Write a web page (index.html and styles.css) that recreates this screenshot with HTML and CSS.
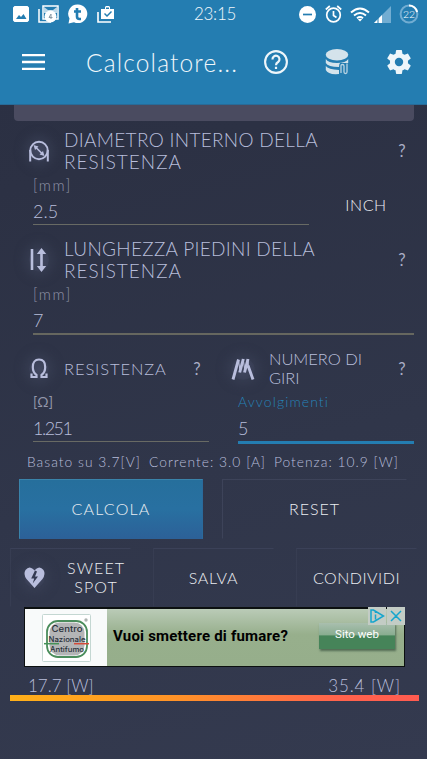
FILE: index.html
```html
<!DOCTYPE html>
<html lang="it">
<head>
<meta charset="utf-8">
<title>Calcolatore</title>
<link rel="stylesheet" href="styles.css">
</head>
<body>
<header class="header">
  <div class="status">
    <div class="status-left">
      <svg width="16" height="16" viewBox="0 0 16 16"><path fill="#fff" fill-rule="evenodd" d="M1.5 0h13L16 1.5v13L14.500 16h-13L0 14.500v-13zM3 13h10.500l-3-5-2.500 3-2-2z"/></svg>
      <svg width="21" height="18" viewBox="0 0 21 18"><path d="M1 4v13h12" fill="none" stroke="#fff" stroke-width="1.500"/><path d="M5 1h15v13H5z" fill="#247db1" stroke="#fff" stroke-width="1.500"/><path d="M6 2l4 3h5l4-3v6H6z" fill="#fff" opacity=".7"/><circle cx="12.500" cy="11.500" r="6" fill="#fff"/><path d="M13 9l-2 3.500h3.500M13 9v5" stroke="#8a9aa5" fill="none"/></svg>
      <svg width="20" height="20" viewBox="0 0 20 20"><path d="M10 .5a9.300 9.300 0 1 1-4 17.700L.500 19.500l1-5A9.300 9.300 0 0 1 10 .5z" fill="#fff"/><path d="M9 4v8.500q0 2.500 2.500 2.500H13M6 7.500h7" fill="none" stroke="#247db1" stroke-width="2.600"/></svg>
      <svg width="18" height="17" viewBox="0 0 18 17"><path d="M1 6v10h13" fill="none" stroke="#fff" stroke-width="1.600"/><path fill="#fff" fill-rule="evenodd" d="M4 3h4V1l1-1h3l1 1v2h4v10H4zm5 0h3V1.500H9zM7 8l3 3 5-5-1-1-4 4-2-2z"/></svg>
    </div>
    <div class="clock">23:15</div>
    <div class="status-right">
      <svg width="17" height="17" viewBox="0 0 17 17"><circle cx="8.500" cy="8.500" r="8.500" fill="#fff"/><path d="M4 8.500h9" stroke="#247db1" stroke-width="1.700"/></svg>
      <svg width="17" height="18" viewBox="0 0 17 18"><g fill="none" stroke="#fff" stroke-width="1.700"><circle cx="8.500" cy="10" r="6.800"/><path d="M8.500 6v4.500l3 2M.800 4.500l4-3.500M16.200 4.500l-4-3.500"/></g></svg>
      <svg width="20" height="15" viewBox="0 0 20 15"><g fill="none" stroke="#fff" stroke-width="2"><path d="M1 5.500q9-8 18 0M4 8.500q6-5 12 0M7 11.200q3-2.200 6 0"/></g><path d="M7.800 12.300q2.200-1.200 4.400 0L10 14.500z" fill="#fff"/></svg>
      <svg width="17" height="17" viewBox="0 0 17 17"><path d="M0 17L17 0v17z" fill="#72add2"/><path d="M0 17l8-8V17z" fill="#fff"/><path d="M4 12v5" stroke="#247db1"/></svg>
      <svg class="battery" width="20" height="20" viewBox="0 0 20 20"><g fill="none" stroke-width="2"><circle cx="10" cy="10" r="8.400" stroke="#72add2"/><path d="M10 1.600a8.400 8.400 0 0 1 8.100 6.400" stroke="#fff"/></g><text x="10" y="13.800" text-anchor="middle">22</text></svg>
    </div>
  </div>
  <div class="toolbar">
    <svg width="23" height="16" viewBox="0 0 23 16"><path d="M0 1h23M0 8h23M0 15h23" stroke="#fff" stroke-width="2.300"/></svg>
    <h1>Calcolatore...</h1>
    <svg class="help" width="24" height="24" viewBox="0 0 24 24"><circle cx="12" cy="12" r="10.900" fill="none" stroke="#eef6fa" stroke-width="2.100"/><path d="M8.500 9.500a3.500 3.500 0 1 1 5.600 2.500Q12 13.300 12 15.200M12 16.800v2.100" fill="none" stroke="#eef6fa" stroke-width="2.200"/></svg>
    <svg class="database" width="24" height="26" viewBox="0 0 24 26"><g fill="#d4e3eb"><ellipse cx="12" cy="5.800" rx="11.300" ry="5.700"/><path d="M.800 10q2.200 4 11.200 4t11.200-4v4H15q-1 1-1 4Q3 18 .800 14zM.800 17q2.200 3.500 13.200 4v4Q3 26 .800 21z"/></g><path d="M16 24v-7.500q0-1 1.500-1T19 17v6q0 1.500 1.500 1.500T22 23v-8.500" fill="none" stroke="#b9d4e3" stroke-width="1.300"/></svg>
    <svg class="gear" width="24" height="24" viewBox="2 2 20 20"><path fill="#eef6fa" d="M19.430 12.980c.040-.320.070-.640.070-.980s-.030-.660-.070-.980l2.110-1.650c.190-.150.240-.420.120-.640l-2-3.460c-.120-.220-.390-.300-.610-.220l-2.490 1c-.520-.400-1.080-.730-1.690-.980l-.380-2.650A.488.488 0 0 0 14 2h-4c-.250 0-.460.180-.490.420l-.380 2.650c-.610.250-1.170.590-1.690.980l-2.490-1c-.230-.090-.490 0-.610.220l-2 3.460c-.130.220-.070.490.120.640l2.110 1.650c-.040.320-.070.650-.070.980s.030.660.070.980l-2.110 1.650c-.190.150-.240.420-.120.640l2 3.460c.120.220.390.300.610.220l2.490-1c.520.400 1.080.730 1.690.980l.380 2.650c.030.240.240.420.490.420h4c.250 0 .460-.180.490-.420l.380-2.650c.610-.250 1.170-.590 1.690-.980l2.490 1c.230.090.490 0 .610-.220l2-3.460c.120-.220.070-.490-.120-.640l-2.110-1.650zM12 15.500a3.500 3.500 0 1 1 0-7 3.500 3.500 0 0 1 0 7z"/></svg>
  </div>
</header>
<main>
  <div class="card-end"></div>

  <section class="param">
    <div class="param-head">
      <svg class="glow" width="20" height="22" viewBox="0 0 20 22"><g fill="none" stroke="#b9bedd"><circle cx="10" cy="10.500" r="8.700" stroke-width="1.900"/><path d="M1.200 10v11.500M18.800 10v11.500" stroke-width="2"/><path d="M6.500 7l7 7" stroke-width="1.600"/></g><path d="M4.500 5l5 1.500-3.500 3.500zM15.500 16l-5-1.500 3.500-3.500z" fill="#b9bedd"/></svg>
      <h2 class="wide"><span class="tight">DIAMETRO INTERNO DELLA</span><br>RESISTENZA</h2>
      <span class="hint">?</span>
    </div>
    <div class="param-body">
      <div class="field short"><label>[mm]</label><div class="value">2.5</div></div>
      <button class="inch">INCH</button>
    </div>
  </section>

  <section class="param second">
    <div class="param-head">
      <svg class="glow" width="20" height="24" viewBox="0 0 20 24"><path d="M3 1v21M12.500 5v14" stroke="#b9bedd" stroke-width="2.600"/><path d="M12.500 0l4.700 6H7.800zM12.500 24l4.700-6H7.800z" fill="#b9bedd"/></svg>
      <h2 class="wide"><span class="tight">LUNGHEZZA PIEDINI DELLA</span><br>RESISTENZA</h2>
      <span class="hint">?</span>
    </div>
    <div class="param-body">
      <div class="field strong"><label>[mm]</label><div class="value">7</div></div>
    </div>
  </section>

  <div class="pair">
    <section>
      <div class="param-head">
        <svg class="glow" width="20" height="22" viewBox="0 0 20 22"><path d="M2.500 15.500V19h5v-2C4.500 15 3.800 12.500 3.800 9 3.800 4.500 6 1.500 10 1.500s6.200 3 6.200 7.500c0 3.500-.7 6-3.700 8v2h5v-3.500" fill="none" stroke="#b9bedd" stroke-width="2.200"/></svg>
        <h2>RESISTENZA</h2>
        <span class="hint">?</span>
      </div>
      <div class="field"><label class="ohm">[Ω]</label><div class="value resistance">1.251</div></div>
    </section>
    <section class="turns">
      <div class="param-head">
        <svg class="glow" width="24" height="22" viewBox="0 0 24 22"><path d="M2 21.500L7.500 1.500M8.700 14.500L12.300 1M13.500 14.500L17 1M17 7.500L22 21.500" fill="none" stroke="#b9bedd" stroke-width="2.900"/><path d="M7.500 2L9 13M12.300 2L14 13M17 1l.5 8" fill="none" stroke="#b9bedd" stroke-width="1"/></svg>
        <h2 class="tight">NUMERO DI<br>GIRI</h2>
        <span class="hint">?</span>
      </div>
      <div class="field active"><label>Avvolgimenti</label><div class="value">5</div></div>
    </section>
  </div>

  <div class="summary"><span>Basato su 3.7[V]</span><span>Corrente: 3.0 [A]</span><span>Potenza: 10.9 [W]</span></div>

  <div class="actions">
    <button class="primary">CALCOLA</button>
    <button class="reset">RESET</button>
  </div>
  <div class="tools">
    <button class="sweet"><svg class="glow" width="21" height="21" viewBox="0 0 21 21"><path d="M10.500 21L2.500 12Q-1 7 1.500 3 5-1.500 9 2l1.500 1.500L12 2q4-3.500 7.500 1 2.500 4-1 9z" fill="#b9bedd"/><path d="M11 3.500l-3.800 8h3l-1.500 5 5.300-7h-3l2-5z" fill="#343a52"/></svg><span>SWEET<br>SPOT</span></button>
    <button class="save">SALVA</button>
    <button class="share">CONDIVIDI</button>
  </div>

  <div class="ad">
    <div class="ad-logo">
      <svg width="49" height="48" viewBox="0 0 49 48"><rect x=".5" y=".5" width="48" height="47" rx="1" fill="#fff" stroke="#c4d7d2"/><rect x="5" y="7" width="40" height="36" rx="11" fill="#fff" stroke="#4b8d5c" stroke-width="1.800"/><rect x="7.500" y="8.500" width="35" height="33" rx="10" fill="#b4b5b6"/><circle cx="44" cy="6" r="1.700" fill="#adb2b0"/><path d="M2 29.700h15" stroke="#459258" stroke-width="1.500"/><path d="M32 29.700h15" stroke="#d54b38" stroke-width="1.500"/><g text-anchor="middle"><text class="logo-a" x="25" y="18" textLength="31" lengthAdjust="spacingAndGlyphs">Centro</text><text class="logo-b" x="25" y="28" textLength="37" lengthAdjust="spacingAndGlyphs">Nazionale</text><text class="logo-b" x="25" y="38" textLength="34" lengthAdjust="spacingAndGlyphs">Antifumo</text></g></svg>
    </div>
    <div class="ad-body"><strong>Vuoi smettere di fumare?</strong><span class="ad-link">Sito web</span></div>
    <div class="ad-choice">
      <svg width="37" height="18" viewBox="0 0 37 18"><path d="M0 0h18v18H0zM19 0h18v18H19z" fill="#c3ccc5"/><g fill="none" stroke="#16a5cd" stroke-width="1.500"><path d="M3 3v12h2.500L15.500 9 5.500 3zM7.500 7.500v5M7.500 4.500v1.500M23 4l10 10M33 4L23 14"/></g></svg>
    </div>
  </div>

  <div class="range"><span class="low">17.7 [W]</span><span class="high">35.4 [W]</span></div>
  <div class="range-bar"></div>
</main>
</body>
</html>
```

FILE: styles.css
```css
* { box-sizing: border-box; }
body {
  margin: 0;
  height: 759px;
  overflow: hidden;
  background: linear-gradient(165deg, #2a2f42 0%, #2c3144 22%, #30364a 60%, #343a4f 100%);
  color: #b8bedb;
  font-family: Lato, "Open Sans", sans-serif;
  font-weight: 300;
}
h1, h2 { margin: 0; font-weight: 300; }
svg { display: block; flex: none; }
.header { height: 105px; background: #247db1; border-bottom: 1px solid #286b98; color: #f0f7fb; }
.status { height: 28px; display: grid; grid-template-columns: 194px 1fr 121px; align-items: center; }
.status-left { display: flex; align-items: center; padding-left: 13px; gap: 9px; }
.clock { font-size: 17px; line-height: 28px; letter-spacing: -.3px; }
.status-right { display: flex; align-items: center; gap: 8.5px; margin-left: -7px; }
.status-right svg:nth-child(4) { margin-left: -5px; }
.status-right .battery { margin-left: 0; }
.battery text { font-size: 10.5px; fill: #fff; }
.toolbar { height: 68px; display: flex; align-items: center; padding-left: 22px; }
.toolbar h1 { margin-left: 41px; width: 178px; font-size: 24.500px; letter-spacing: 1.150px; white-space: nowrap; }
.database { margin-left: 37px; }
.gear { margin-left: 38px; }
.card-end { height: 16px; margin: 0 13px 0 14px; background: #4a4b60; border-radius: 0 0 4px 4px; }
.param { padding: 8px 13px 0 29px; height: 109px; }
.param-head { display: flex; align-items: center; height: 44px; }
.param-head h2 { margin-left: 15px; flex: 1; font-size: 16.5px; line-height: 19px; letter-spacing: .9px; white-space: nowrap; }
.param-head h2.wide { font-size: 19px; line-height: 22px; letter-spacing: 1px; }
.wide .tight { letter-spacing: .3px; }
.param-head h2.tight { letter-spacing: -.05px; }
.hint { width: 24px; text-align: center; font-size: 16.500px; font-weight: 400; color: #a9aec6; padding-bottom: 1px; }
.glow { background: radial-gradient(circle, #424861 0%, #3a4057 60%, transparent 100%); border-radius: 50%; box-shadow: 0 0 10px 5px #3b415799; overflow: visible; }
.param-body { display: flex; padding-left: 4px; }
.field { flex: 1; height: 52px; border-bottom: 1px solid #686a64; }
.field.short { flex: none; width: 276px; }
.field.strong { border-bottom: 2px solid #66675f; height: 53px; }
.field label { display: block; height: 24px; line-height: 24px; font-size: 15px; letter-spacing: 1.700px; color: #9296aa; }
.field label.ohm { font-size: 14px; letter-spacing: .3px; font-weight: 400; }
.value { height: 27px; line-height: 28px; font-size: 18px; letter-spacing: 0; }
.value.resistance { letter-spacing: -1.500px; line-height: 29px; }
.inch { flex: 1; height: 58px; margin: 3px 0 0 9px; }
.pair { display: grid; grid-template-columns: 180px 183px; gap: 22px; padding: 9px 13px 0 29px; }
.pair .param-head { height: 42px; }
.pair .field { margin-left: 4px; height: 52px; }
.pair .field.active { height: 54px; border-bottom: 3px solid #247db1; margin-left: 7px; }
.field.active label { font-size: 14px; color: #2683b8; letter-spacing: 1.100px; }
.field.active .value { line-height: 29px; }
.turns .param-head h2 { margin-left: 14px; }
.summary { height: 35px; padding-left: 27px; display: flex; gap: 8px; line-height: 36px; font-size: 13.800px; letter-spacing: 1.020px; white-space: pre; }
button { font: inherit; font-size: 16px; letter-spacing: .6px; line-height: 19px; color: #eceef2; background: transparent; border: 1px solid transparent; padding: 0 0 2px; }
.actions { display: grid; grid-template-columns: 184px 185px; gap: 19px; padding-left: 19px; height: 60px; }
.actions button { border-color: #3d4359 transparent transparent #3d4359; }
.actions .primary { background: linear-gradient(#266f9c, #2870a1 50%, #2c6198); border-color: #3a83aa #2a6a9b #2c6198 #3a83aa; letter-spacing: 1.200px; }
.actions .reset { letter-spacing: 1px; }
.tools { display: grid; grid-template-columns: repeat(3, 121px); gap: 22px; padding: 9px 0 0 10px; height: 68px; }
.tools button { border-color: #3b4158 transparent transparent #373d52; padding: 0 0 1px; }
.tools .save { letter-spacing: .8px; }
.tools .share { letter-spacing: .500px; }
.tools .sweet { display: flex; align-items: center; padding-left: 13px; gap: 22px; letter-spacing: 1.100px; }
.ad { position: relative; width: 381px; height: 60px; margin-left: 24px; border: 1px solid #0c1010; border-top-width: 2px; display: flex; }
.ad-logo { width: 82px; background: #f8fafa; display: flex; align-items: center; justify-content: center; font-family: Inter, sans-serif; }
.logo-a { font-size: 8.500px; font-weight: 500; fill: #283039; }
.logo-b { font-size: 7px; font-weight: 500; fill: #283039; }
.ad-body { flex: 1; display: flex; align-items: center; background: linear-gradient(#bacbb7, #97af8c 45%, #96ae8b); font-family: Roboto, sans-serif; padding: 0 9px 4px 6px; justify-content: space-between; }
.ad strong { font-size: 15px; letter-spacing: .2px; font-weight: 700; color: #000; white-space: nowrap; }
.ad-link { width: 76px; height: 26px; line-height: 22px; background: linear-gradient(#a9bfae 0%, #8aad91 45%, #468459 50%); color: #fff; font-size: 11.500px; font-weight: 400; text-align: center; box-shadow: 1px 2px 2px #526c54; }
.ad-choice { position: absolute; right: -1px; top: -2px; }
.range { height: 28px; display: flex; justify-content: space-between; padding: 5px 26px 0 28px; font-size: 17px; line-height: 28px; }
.range .low { letter-spacing: 0; }
.range .high { letter-spacing: .9px; }
.range-bar { height: 6px; margin: 0 8px 0 10px; background: linear-gradient(90deg, #ffb019, #ff9327 40%, #ff634c 80%, #ff5b50); }
```
